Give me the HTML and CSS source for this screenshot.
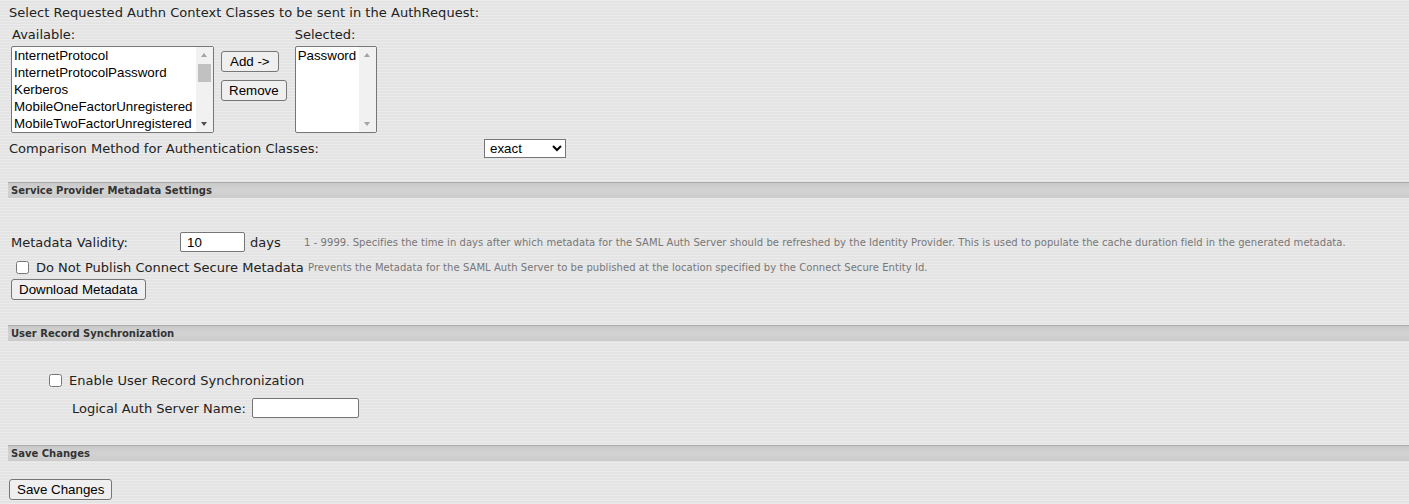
FILE: index.html
```html
<!DOCTYPE html>
<html lang="en">
<head>
  <meta charset="UTF-8" />
  <title>SAML Auth Server</title>
  <link rel="stylesheet" href="styles.css">
</head>
<body>
  <div class="page">
    <div class="authn-title">Select Requested Authn Context Classes to be sent in the AuthRequest:</div>

    <div class="authn-picker">
      <div class="picker-col">
        <div class="picker-label">Available:</div>
        <div class="listbox listbox-wide">
          <div class="listbox-items">
            <div class="listbox-item">InternetProtocol</div>
            <div class="listbox-item">InternetProtocolPassword</div>
            <div class="listbox-item">Kerberos</div>
            <div class="listbox-item">MobileOneFactorUnregistered</div>
            <div class="listbox-item">MobileTwoFactorUnregistered</div>
          </div>
          <div class="scrollbar">
            <span class="scroll-arrow up"></span>
            <span class="scroll-track"><span class="scroll-thumb"></span></span>
            <span class="scroll-arrow down active"></span>
          </div>
        </div>
      </div>
      <div class="picker-buttons">
        <button class="btn btn-add">Add -&gt;</button>
        <button class="btn">Remove</button>
      </div>
      <div class="picker-col selected-col">
        <div class="picker-label">Selected:</div>
        <div class="listbox listbox-narrow">
          <div class="listbox-items">
            <div class="listbox-item">Password</div>
          </div>
          <div class="scrollbar">
            <span class="scroll-arrow up"></span>
            <span class="scroll-track"></span>
            <span class="scroll-arrow down"></span>
          </div>
        </div>
      </div>
    </div>

    <div class="comparison-row">
      <label for="comparison">Comparison Method for Authentication Classes:</label>
      <select id="comparison" class="dropdown">
        <option selected>exact</option>
        <option>minimum</option>
        <option>maximum</option>
        <option>better</option>
      </select>
    </div>

    <div class="section-bar">Service Provider Metadata Settings</div>

    <div class="metadata-rows">
      <div class="form-row">
        <label class="row-label" for="validity">Metadata Validity:</label>
        <input id="validity" class="text-input validity-input" type="text" value="10">
        <span class="units">days</span>
        <span class="help">1 - 9999. Specifies the time in days after which metadata for the SAML Auth Server should be refreshed by the Identity Provider. This is used to populate the cache duration field in the generated metadata.</span>
      </div>
      <div class="form-row publish-row">
        <label class="check-label">
          <input type="checkbox" class="checkbox">
          <span>Do Not Publish Connect Secure Metadata</span>
        </label>
        <span class="help">Prevents the Metadata for the SAML Auth Server to be published at the location specified by the Connect Secure Entity Id.</span>
      </div>
      <div class="download-row">
        <button class="btn">Download Metadata</button>
      </div>
    </div>

    <div class="section-bar">User Record Synchronization</div>

    <div class="sync-rows">
      <label class="check-label">
        <input type="checkbox" class="checkbox">
        <span>Enable User Record Synchronization</span>
      </label>
      <div class="server-name-row">
        <label for="server-name">Logical Auth Server Name:</label>
        <input id="server-name" class="text-input server-input" type="text">
      </div>
    </div>

    <div class="section-bar">Save Changes</div>

    <div class="save-row">
      <button class="btn">Save Changes</button>
    </div>
  </div>
</body>
</html>
```

FILE: styles.css
```css
body {
  margin: 0;
  padding: 0 0 0 8px;
  font-family: "DejaVu Sans", Verdana, sans-serif;
  font-size: 13px;
  color: #222;
  background-color: #e7e7e7;
  background-image:
    repeating-linear-gradient(180deg, rgba(255,255,255,0.35) 0px, rgba(255,255,255,0) 1px, rgba(0,0,0,0.025) 2px, rgba(255,255,255,0) 3px);
}
.page {
  padding-top: 5px;
}
.authn-title {
  padding-left: 1px;
  line-height: 16px;
  letter-spacing: 0.04px;
}
.authn-picker {
  display: flex;
  align-items: flex-start;
  margin-top: 6px;
}
.picker-col {
  display: flex;
  flex-direction: column;
}
.picker-label {
  padding-left: 4px;
  line-height: 16px;
  margin-bottom: 3px;
}
.selected-col .picker-label {
  padding-left: 0;
}

/* listboxes drawn by hand so the scrollbar looks like the windows one */
.listbox {
  display: flex;
  height: 87px;
  box-sizing: border-box;
  margin-left: 3px;
  background: #fff;
  border: 1px solid #767676;
  border-radius: 2px;
  overflow: hidden;
  font-family: "Liberation Sans", Arial, sans-serif;
  font-size: 13.33px;
  color: #000;
}
.listbox-wide {
  width: 203px;
}
.listbox-narrow {
  width: 82px;
  margin-left: 0;
}
.listbox-items {
  flex: 1;
  overflow: hidden;
}
.listbox-item {
  height: 17px;
  line-height: 17px;
  padding-left: 2px;
  white-space: nowrap;
}
.scrollbar {
  width: 17px;
  display: flex;
  flex-direction: column;
  background: #f1f1f1;
}
.scroll-arrow {
  height: 17px;
  position: relative;
}
.scroll-arrow::after {
  content: "";
  position: absolute;
  left: 5px;
  border-left: 3.5px solid transparent;
  border-right: 3.5px solid transparent;
}
.scroll-arrow.up::after {
  top: 6px;
  border-bottom: 4px solid #a3a3a3;
}
.scroll-arrow.down::after {
  top: 7px;
  border-top: 4px solid #a3a3a3;
}
.scroll-arrow.down.active::after {
  border-top-color: #505050;
}
.scroll-track {
  flex: 1;
  display: block;
}
.scroll-thumb {
  display: block;
  height: 18px;
  margin: 0 2px;
  background: #c1c1c1;
}

.picker-buttons {
  display: flex;
  flex-direction: column;
  align-items: flex-start;
  gap: 8px;
  margin: 24px 8px 0 7px;
}
.btn {
  font-family: "Liberation Sans", Arial, sans-serif;
  font-size: 13.33px;
  color: #000;
  background: #efefef;
  border: 1px solid #767676;
  border-radius: 3px;
  padding: 1px 7px;
  height: 21px;
}
.btn-add {
  padding: 1px 8px;
}
.comparison-row {
  display: flex;
  align-items: center;
  margin-top: 6px;
  padding-left: 1px;
}
.comparison-row label {
  width: 475px;
}
.dropdown {
  width: 82px;
  height: 19px;
  font-family: "Liberation Sans", Arial, sans-serif;
  font-size: 13.33px;
  color: #000;
  background: #fff;
  border: 1px solid #767676;
  border-radius: 0;
  padding: 0 1px;
}
.section-bar {
  margin-top: 24px;
  height: 15px;
  line-height: 15px;
  padding-left: 3px;
  font-size: 10px;
  font-weight: bold;
  color: #333;
  border-top: 1px solid #aaa;
  background: linear-gradient(180deg, #c9c9c9 0%, #d3d3d3 50%, #cbcbcb 100%);
}
.metadata-rows {
  padding: 34px 0 1px 3px;
}
.form-row {
  display: flex;
  align-items: center;
}
.row-label {
  width: 169px;
}
.text-input {
  font-family: "Liberation Sans", Arial, sans-serif;
  font-size: 13.33px;
  color: #000;
  background: #fff;
  border: 1px solid #767676;
  border-radius: 2px;
  padding: 1px 6px;
  height: 20px;
  box-sizing: border-box;
}
.validity-input {
  width: 65px;
}
.units {
  margin-left: 5px;
  width: 54px;
}
.help {
  font-size: 10px;
  color: #777;
  letter-spacing: 0.055px;
}
.check-label {
  display: flex;
  align-items: center;
}
.checkbox {
  width: 13px;
  height: 13px;
  margin: 0 7px 0 5px;
}
.publish-row {
  margin-top: 8px;
}
.publish-row .check-label {
  width: 297px;
}
.download-row {
  margin-top: 4px;
}
.sync-rows {
  padding: 32px 0 3px 36px;
}
.server-name-row {
  display: flex;
  align-items: center;
  margin-top: 10px;
  padding-left: 28px;
  gap: 6px;
}
.server-input {
  width: 107px;
}
.save-row {
  margin-top: 18px;
  padding-left: 1px;
}
```
